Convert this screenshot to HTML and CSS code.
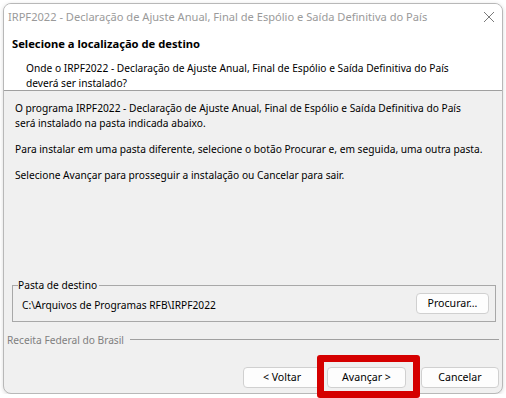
FILE: index.html
```html
<!DOCTYPE html>
<html lang="pt-BR">
<head>
  <meta charset="UTF-8" />
  <title>IRPF2022 - Instalação</title>
  <link rel="stylesheet" href="styles.css">
</head>
<body>

<div class="dialog">
  <div class="titlebar">
    <span class="title">IRPF2022 - Declaração de Ajuste Anual, Final de Espólio e Saída Definitiva do País</span>
    <svg class="close" width="12" height="12" viewBox="0 0 12 12">
      <path d="M1 1 L11 11 M11 1 L1 11" stroke="#7a7a7a" stroke-width="1" fill="none"/>
    </svg>
  </div>

  <div class="header">
    <div class="header-title">Selecione a localização de destino</div>
    <div class="header-sub">Onde o IRPF2022 - Declaração de Ajuste Anual, Final de Espólio e Saída Definitiva do País<br>deverá ser instalado?</div>
  </div>

  <div class="content">
    <div class="text">
      <p>O programa IRPF2022 - Declaração de Ajuste Anual, Final de Espólio e Saída Definitiva do País<br>será instalado na pasta indicada abaixo.</p>
      <p>Para instalar em uma pasta diferente, selecione o botão Procurar e, em seguida, uma outra pasta.</p>
      <p>Selecione Avançar para prosseguir a instalação ou Cancelar para sair.</p>
    </div>

    <fieldset class="group">
      <legend>Pasta de destino</legend>
      <div class="path-row">
        <span class="path">C:\Arquivos de Programas RFB\IRPF2022</span>
        <button class="btn btn-browse">Procurar...</button>
      </div>
    </fieldset>

    <div class="brand">
      <span>Receita Federal do Brasil</span>
      <div class="brand-line"></div>
    </div>

    <div class="buttons">
      <button class="btn">&lt; Voltar</button>
      <button class="btn btn-next">Avançar &gt;</button>
      <button class="btn btn-cancel">Cancelar</button>
    </div>
  </div>
</div>

<div class="highlight"></div>

</body>
</html>
```

FILE: styles.css
```css
html, body {
  margin: 0;
  padding: 0;
  background: white;
  font-family: "Noto Sans", "Open Sans", sans-serif;
  font-size: 10.2px;
  line-height: 15px;
  color: black;
}

.dialog {
  box-sizing: border-box;
  margin: 3px 0 0 3px;
  width: 500px;
  height: 391px;
  border: 1px solid #b8b8b8;
  border-radius: 8px;
  background: #f0f0f0;
  overflow: hidden;
  display: flex;
  flex-direction: column;
  box-shadow: 0 1px 4px rgba(0, 0, 0, 0.15);
}

.titlebar {
  height: 28px;
  background: white;
  display: flex;
  align-items: center;
  padding: 0 7px 0 4px;
}

.title {
  color: #9a9a9a;
  font-size: 11.1px;
  flex: 1;
  white-space: nowrap;
  margin-top: -4px;
}

.close {
  margin-top: -2px;
}

.header {
  background: white;
  border-bottom: 1px solid #a0a0a0;
  box-sizing: border-box;
  height: 59px;
  padding-top: 4px;
}

.header-title {
  font-weight: bold;
  font-size: 11.2px;
  padding-left: 8px;
}

.header-sub {
  margin-top: 10px;
  padding-left: 22px;
  white-space: nowrap;
}

.content {
  flex: 1;
  display: flex;
  flex-direction: column;
  padding-bottom: 5px;
}

.text {
  padding: 10px 10px 0 11px;
}

.text p {
  margin: 0 0 11px 0;
  white-space: nowrap;
}

.group {
  margin: auto 6px 0 8px;
  padding: 0 6px 7px 9px;
  border: 1px solid #a8a8a8;
  border-radius: 0;
}

.group legend {
  margin-left: -4px;
  padding: 0 2px 0 0;
}

.path-row {
  display: flex;
  align-items: center;
  justify-content: space-between;
}

.path {
  padding-top: 4px;
}

.btn {
  font-family: inherit;
  font-size: 10.6px;
  line-height: 15px;
  height: 21px;
  padding: 0;
  background: #fdfdfd;
  color: black;
  border: 1px solid #d0d0d0;
  border-radius: 4px;
}

.btn-browse {
  width: 73px;
}

.brand {
  display: flex;
  align-items: center;
  padding: 0 3px;
  margin-top: 11px;
  color: #7f7f7f;
}

.brand-line {
  flex: 1;
  height: 1px;
  background: #a0a0a0;
  margin: -3px 0 0 6px;
}

.buttons {
  display: flex;
  justify-content: flex-end;
  padding-right: 3px;
  margin-top: 19px;
}

.buttons .btn {
  width: 78px;
}

.buttons .btn-next {
  width: 79px;
  margin-left: 6px;
}

.buttons .btn-cancel {
  margin-left: 15px;
}

.highlight {
  position: absolute;
  left: 317px;
  top: 355px;
  width: 103px;
  height: 43px;
  box-sizing: border-box;
  border: 7px solid #d50000;
  border-radius: 3px;
}
```
